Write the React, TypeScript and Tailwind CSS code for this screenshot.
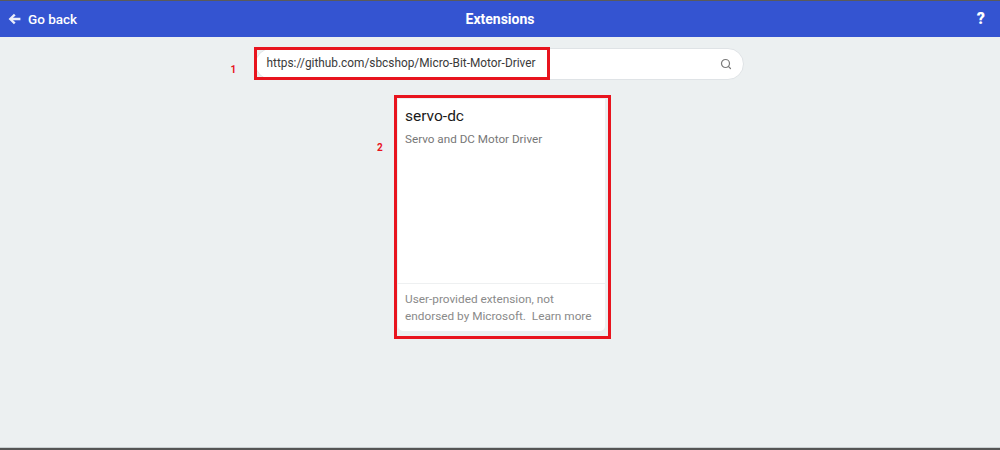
import { Search } from "lucide-react";

export default function App() {
  return (
    <div
      className="w-[1000px] h-[450px] flex flex-col bg-[#ecf0f1] overflow-hidden"
      style={{ fontFamily: "Roboto, 'Noto Sans', sans-serif" }}
    >
      <header className="h-[37px] shrink-0 border-t border-[#5a5a5a] bg-[#3454d1] text-white flex items-center px-[8px] relative">
        <div className="flex items-center gap-[7px]">
          <svg width="13" height="12" viewBox="0 0 14 13" className="fill-white/90">
            <path d="M0.6 6.5 L6.4 0.8 L8.2 2.6 L5.3 5.2 L13.4 5.2 L13.4 7.8 L5.3 7.8 L8.2 10.4 L6.4 12.2 Z" />
          </svg>
          <span className="text-[13.5px] font-medium">Go back</span>
        </div>
        <div className="absolute left-0 right-0 text-center text-[14px] font-bold pointer-events-none">
          Extensions
        </div>
        <span className="ml-auto mr-[7px] text-[16px] font-black leading-none">?</span>
      </header>

      <main className="flex-1 flex flex-col items-center">
        <div className="relative mt-[11px] ml-[-2px] w-[489px] h-[32px] rounded-full bg-white border border-[#dfe3e6] flex items-center pl-[11px] pr-[11px]">
          <span className="text-[11.85px] text-[#3a3a3a]">https://github.com/sbcshop/Micro-Bit-Motor-Driver</span>
          <Search className="ml-auto w-[12px] h-[12px] text-[#7a7a7a]" strokeWidth={2.4} />
          <div className="absolute left-[-2px] top-[-2px] w-[296px] h-[33px] border-[3px] border-[#e8141e]" />
          <span className="absolute left-[-25px] top-[13px] text-[10px] font-bold text-[#e8141e]">1</span>
        </div>

        <div className="relative mt-[15px] ml-[5px] w-[217px] h-[244px] border-[3px] border-[#e8141e] pl-[1px] pt-[1px] pr-[3px] pb-[5px]">
          <div className="h-full bg-white rounded-b-[5px] flex flex-col">
            <div className="flex-1 px-[7px] pt-[7px]">
              <div className="text-[15.5px] leading-[20px] text-[#1a1a1a]">servo-dc</div>
              <div className="mt-[5px] text-[11.7px] text-[#777]">Servo and DC Motor Driver</div>
            </div>
            <div className="border-t border-[#eef0f1] px-[7px] pt-[7px] pb-[6px] text-[11.8px] leading-[17px] text-[#8a8a8a]">
              User-provided extension, not
              <br />
              endorsed by Microsoft.&nbsp; Learn more
            </div>
          </div>
          <span className="absolute left-[-20px] top-[42px] text-[10px] font-bold text-[#e8141e]">2</span>
        </div>
      </main>

      <div className="h-[3px] shrink-0 border-t border-[#c9cfd1] bg-[#555]" />
    </div>
  );
}
